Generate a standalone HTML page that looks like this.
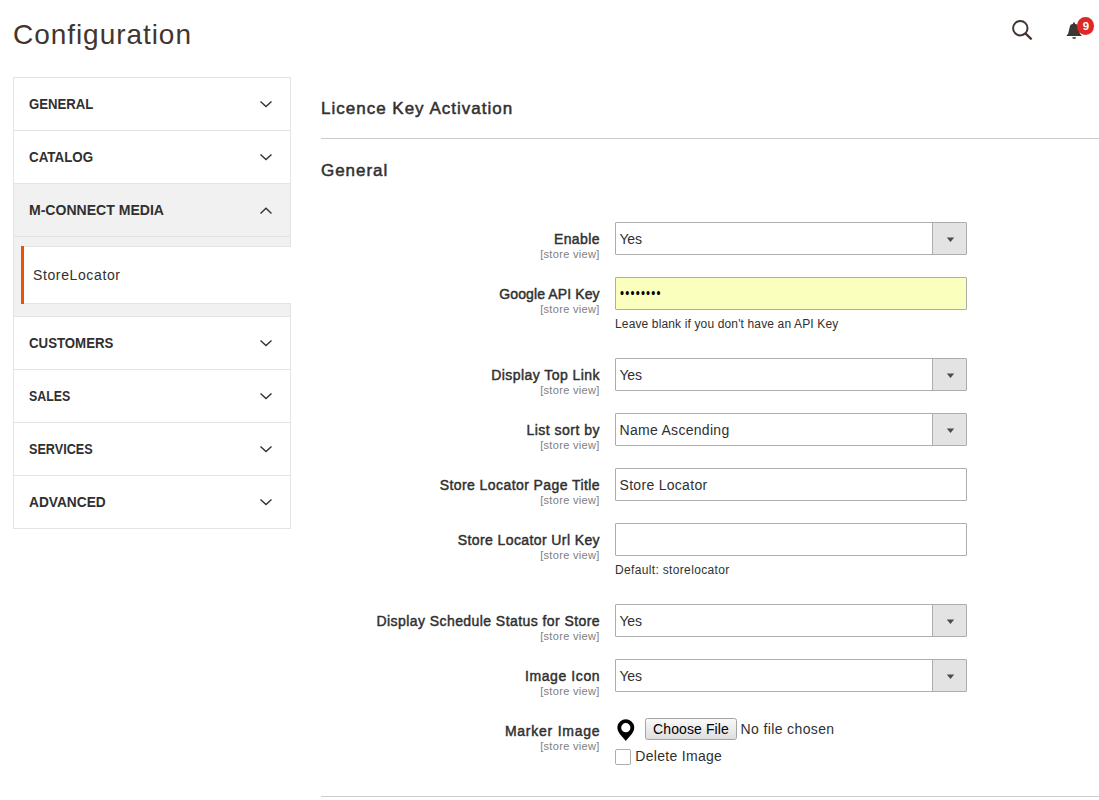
<!DOCTYPE html>
<html lang="en">
<head>
<meta charset="utf-8">
<title>Configuration</title>
<style>
*{box-sizing:border-box;margin:0;padding:0}
html,body{width:1099px;height:800px;overflow:hidden;background:#fff}
body{font-family:"Liberation Sans",Arial,sans-serif;font-size:14px;color:#303030;position:relative}
.abs{position:absolute;white-space:nowrap}
h1.title{left:13px;top:14.500px;font-size:28px;line-height:40px;font-weight:400;color:#41362f;letter-spacing:0.95px}

/* sidebar */
.nav{left:13px;top:77px;width:278px;height:452px;border:1px solid #e3e3e3;border-right:1px solid #e3e3e3;background:#fff}
.nav .item{position:absolute;left:0;width:276px;height:53px;border-top:1px solid #e3e3e3;font-weight:700;font-size:14px;line-height:52px;padding-left:15px;color:#303030;text-transform:uppercase}
.nav .item:first-child{border-top:none}
.nav .item span{display:inline-block;transform-origin:0 50%}
.nav .item svg{position:absolute;left:244.800px;top:22px}
.nav .open{background:#f1f1f1}
.nav .sub{position:absolute;left:0;top:158px;width:276px;height:81px;background:#f1f1f1;border-top:1px solid #e3e3e3}
.nav .link{position:absolute;left:7px;top:9px;width:270px;height:58px;background:#fff;border-top:1px solid #e3e3e3;border-bottom:1px solid #e3e3e3;font-size:14px;line-height:56px;padding-left:12px;color:#303030;letter-spacing:.62px}
.nav .link::before{content:"";position:absolute;left:0;top:-1px;width:3px;height:58px;background:#eb5202}

/* main */
.sec{left:321px;font-size:17px;font-weight:400;-webkit-text-stroke:.5px #303030;color:#303030;letter-spacing:1px}
.hr{left:321px;width:778px;height:1px;background:#ccc}
.lbl{right:499.400px;text-align:right;font-weight:400;-webkit-text-stroke:.45px #303030;font-size:14px;line-height:20px;color:#303030;letter-spacing:.5px}
.scope{right:499.700px;text-align:right;font-size:11px;line-height:14px;color:#808080;letter-spacing:.32px;margin-right:-.32px}
.ctl{left:615px;width:352px;height:33px;border:1px solid #adadad;border-radius:1px;background:#fff;font-size:14px;line-height:33px;padding-left:3.5px;color:#303030;letter-spacing:.3px}
.ctl.sel::after{content:"";position:absolute;right:0;top:0;width:33px;height:31px;background:#e3e3e3;border-left:1px solid #adadad}
.ctl.sel svg{position:absolute;right:11.500px;top:13.800px;z-index:2}
.note{left:615px;font-size:12px;line-height:16px;color:#303030}
</style>
</head>
<body>
<h1 class="abs title">Configuration</h1>

<svg class="abs" style="left:1007.700px;top:16px" width="28" height="28" viewBox="0 0 28 28"><circle cx="12.3" cy="12.2" r="7.2" fill="none" stroke="#41362f" stroke-width="2"/><line x1="17.4" y1="17.4" x2="23.6" y2="23.4" stroke="#41362f" stroke-width="2.2"/></svg>
<svg class="abs" style="left:1060px;top:15px" width="30" height="30" viewBox="0 0 30 30"><path d="M14 6.700L15.300 9C17 9.200 18 10.100 18.200 11.500L20 18.800L21.600 20.500V21H6.600V20.500L8.100 18.800L9.900 11.500C10.100 10.100 11 9.200 12.700 9Z" fill="#41362f"/><path d="M12.200 22.300h3.900a1.950 1.800 0 0 1 -3.900 0z" fill="#41362f"/></svg>
<div class="abs" style="left:1077.200px;top:17px;width:17px;height:17.500px;border-radius:9px;background:#e22626;color:#fff;font-size:11.500px;font-weight:700;line-height:18.500px;text-align:center;padding-left:.5px">9</div>

<div class="abs nav">
  <div class="item" style="top:0"><span style="transform:scaleX(0.94)">General</span><svg width="14" height="9" viewBox="0 0 14 9"><polyline points="1.500,1.400 7,6.500 12.500,1.400" fill="none" stroke="#333" stroke-width="1.400"/></svg></div>
  <div class="item" style="top:52px"><span style="transform:scaleX(0.955)">Catalog</span><svg width="14" height="9" viewBox="0 0 14 9"><polyline points="1.500,1.400 7,6.500 12.500,1.400" fill="none" stroke="#333" stroke-width="1.400"/></svg></div>
  <div class="item open" style="top:105px"><span style="transform:scaleX(1.003)">M-Connect Media</span><svg width="14" height="9" viewBox="0 0 14 9"><polyline points="1.500,7.400 7,2.200 12.500,7.400" fill="none" stroke="#333" stroke-width="1.400"/></svg></div>
  <div class="sub"><div class="link">StoreLocator</div></div>
  <div class="item" style="top:238px"><span style="transform:scaleX(0.946)">Customers</span><svg width="14" height="9" viewBox="0 0 14 9"><polyline points="1.500,1.400 7,6.500 12.500,1.400" fill="none" stroke="#333" stroke-width="1.400"/></svg></div>
  <div class="item" style="top:291px"><span style="transform:scaleX(0.883)">Sales</span><svg width="14" height="9" viewBox="0 0 14 9"><polyline points="1.500,1.400 7,6.500 12.500,1.400" fill="none" stroke="#333" stroke-width="1.400"/></svg></div>
  <div class="item" style="top:344px"><span style="transform:scaleX(0.902)">Services</span><svg width="14" height="9" viewBox="0 0 14 9"><polyline points="1.500,1.400 7,6.500 12.500,1.400" fill="none" stroke="#333" stroke-width="1.400"/></svg></div>
  <div class="item" style="top:397px"><span style="transform:scaleX(0.98)">Advanced</span><svg width="14" height="9" viewBox="0 0 14 9"><polyline points="1.500,1.400 7,6.500 12.500,1.400" fill="none" stroke="#333" stroke-width="1.400"/></svg></div>
</div>

<div class="abs sec" style="top:99px">Licence Key Activation</div>
<div class="abs hr" style="top:138px"></div>
<div class="abs sec" style="top:161px;letter-spacing:.95px">General</div>

<div class="abs lbl" style="top:229px;letter-spacing:0.42px;margin-right:-0.42px">Enable</div><div class="abs scope" style="top:247px">[store view]</div>
<div class="abs ctl sel" style="top:222px;letter-spacing:-.2px">Yes<svg width="9" height="6" viewBox="0 0 9 6"><path d="M0.800 0.500h7.400L4.500 4.900z" fill="#514943"/></svg></div>

<div class="abs lbl" style="top:284px;letter-spacing:0.11px;margin-right:-0.11px">Google API Key</div><div class="abs scope" style="top:302px">[store view]</div>
<div class="abs ctl" style="top:277px;background:#faffbd;letter-spacing:0;padding-left:4.400px"><span style="display:inline-block;font-size:14px;line-height:31px;letter-spacing:1.470px;transform:scaleX(.82);transform-origin:0 50%;position:relative;top:-.6px;color:#000">••••••••</span></div>
<div class="abs note" style="top:316px;letter-spacing:.14px">Leave blank if you don't have an API Key</div>

<div class="abs lbl" style="top:365px;letter-spacing:0.45px;margin-right:-0.45px">Display Top Link</div><div class="abs scope" style="top:383px">[store view]</div>
<div class="abs ctl sel" style="top:358px;letter-spacing:-.2px">Yes<svg width="9" height="6" viewBox="0 0 9 6"><path d="M0.800 0.500h7.400L4.500 4.900z" fill="#514943"/></svg></div>

<div class="abs lbl" style="top:420px;letter-spacing:0.5px;margin-right:-0.5px">List sort by</div><div class="abs scope" style="top:438px">[store view]</div>
<div class="abs ctl sel" style="top:413px">Name Ascending<svg width="9" height="6" viewBox="0 0 9 6"><path d="M0.800 0.500h7.400L4.500 4.900z" fill="#514943"/></svg></div>

<div class="abs lbl" style="top:475px;letter-spacing:0.42px;margin-right:-0.42px">Store Locator Page Title</div><div class="abs scope" style="top:493px">[store view]</div>
<div class="abs ctl" style="top:468px">Store Locator</div>

<div class="abs lbl" style="top:530px;letter-spacing:0.4px;margin-right:-0.4px">Store Locator Url Key</div><div class="abs scope" style="top:548px">[store view]</div>
<div class="abs ctl" style="top:523px"></div>
<div class="abs note" style="top:562px;letter-spacing:.34px">Default: storelocator</div>

<div class="abs lbl" style="top:611px;letter-spacing:0.43px;margin-right:-0.43px">Display Schedule Status for Store</div><div class="abs scope" style="top:629px">[store view]</div>
<div class="abs ctl sel" style="top:604px;letter-spacing:-.2px">Yes<svg width="9" height="6" viewBox="0 0 9 6"><path d="M0.800 0.500h7.400L4.500 4.900z" fill="#514943"/></svg></div>

<div class="abs lbl" style="top:666px;letter-spacing:0.59px;margin-right:-0.59px">Image Icon</div><div class="abs scope" style="top:684px">[store view]</div>
<div class="abs ctl sel" style="top:659px;letter-spacing:-.2px">Yes<svg width="9" height="6" viewBox="0 0 9 6"><path d="M0.800 0.500h7.400L4.500 4.900z" fill="#514943"/></svg></div>

<div class="abs lbl" style="top:721px;letter-spacing:0.76px;margin-right:-0.76px">Marker Image</div><div class="abs scope" style="top:739px">[store view]</div>
<svg class="abs" style="left:616px;top:718px" width="20" height="24" viewBox="0 0 20 24"><path d="M9.800 23.100C7.800 20 3.900 17.200 2.600 14A8.400 8.400 0 1 1 17 14C15.700 17.200 11.800 20 9.800 23.100ZM9.800 5.100a4.600 4.600 0 1 0 0 9.200a4.600 4.600 0 1 0 0 -9.200z" fill="#000" fill-rule="evenodd"/></svg>
<div class="abs" style="left:645px;top:718px;width:92px;height:22px;border:1px solid #a3a3a3;border-radius:2.500px;background:#efefef;font-size:14px;line-height:21px;text-align:center;color:#000;letter-spacing:.1px;background:linear-gradient(#f9f9f9,#dedede)">Choose File</div>
<div class="abs" style="left:740.500px;top:719px;font-size:14px;line-height:20px;color:#303030;letter-spacing:.38px">No file chosen</div>
<div class="abs" style="left:615px;top:749px;width:16px;height:16px;border:1px solid #adadad;border-radius:2px;background:#fff"></div>
<div class="abs" style="left:635.300px;top:746px;font-size:14px;line-height:20px;color:#303030;letter-spacing:.3px">Delete Image</div>

<div class="abs hr" style="top:796px"></div>
</body>
</html>
